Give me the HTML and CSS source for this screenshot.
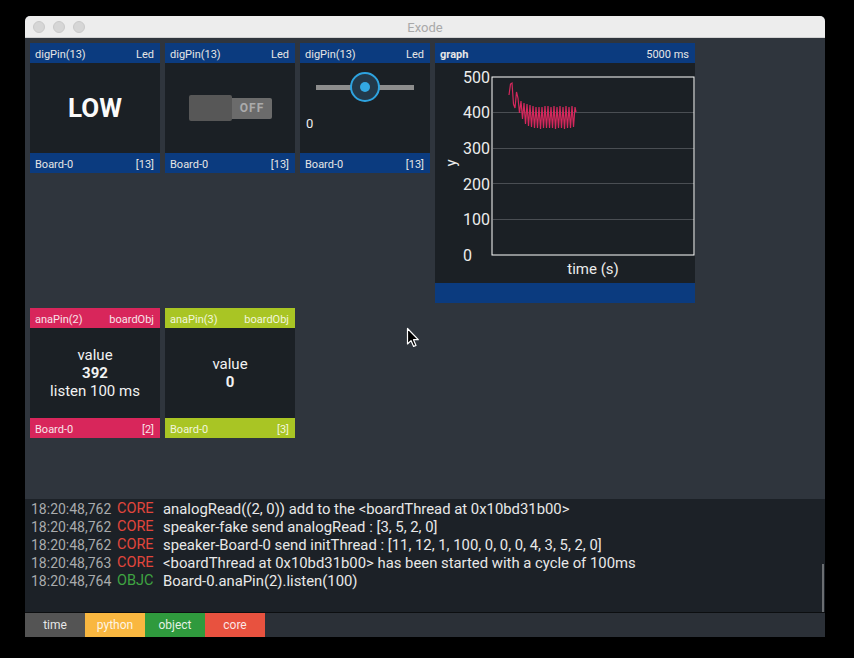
FILE: index.html
```html
<!DOCTYPE html>
<html>
<head>
<meta charset="utf-8">
<title>Exode</title>
<link rel="stylesheet" href="styles.css">
</head>
<body>
<div class="window">
  <div class="titlebar">
    <div class="lights"><span></span><span></span><span></span></div>
    <div class="title">Exode</div>
    <div></div>
  </div>
  <div class="dash">
    <div class="card blue">
      <div class="bar"><span>digPin(13)</span><span>Led</span></div>
      <div class="body"><span class="big">LOW</span></div>
      <div class="bar"><span>Board-0</span><span>[13]</span></div>
    </div>
    <div class="card blue">
      <div class="bar"><span>digPin(13)</span><span>Led</span></div>
      <div class="body">
        <div class="switch"><div class="handle"></div><div class="off">OFF</div></div>
      </div>
      <div class="bar"><span>Board-0</span><span>[13]</span></div>
    </div>
    <div class="card blue">
      <div class="bar"><span>digPin(13)</span><span>Led</span></div>
      <div class="body slider-body">
        <div class="slider"><div class="track"></div><div class="knob"><div class="dot"></div></div></div>
        <div class="slider-val">0</div>
      </div>
      <div class="bar"><span>Board-0</span><span>[13]</span></div>
    </div>
    <div class="card blue graph">
      <div class="bar"><span class="b">graph</span><span>5000 ms</span></div>
      <div class="graph-body">
        <svg width="260" height="220" viewBox="0 0 260 220">
          <g stroke="#4a4e53" stroke-width="1">
            <line x1="58" y1="49.5" x2="259" y2="49.5"/>
            <line x1="58" y1="85.5" x2="259" y2="85.5"/>
            <line x1="58" y1="120.5" x2="259" y2="120.5"/>
            <line x1="58" y1="156.5" x2="259" y2="156.5"/>
          </g>
          <rect x="57" y="14" width="202" height="178" fill="none" stroke="#ffffff" stroke-width="1"/>
          <g fill="#ececec" font-family="Roboto, 'Liberation Sans', sans-serif" font-size="16">
            <text x="28" y="19.5">500</text>
            <text x="28" y="55">400</text>
            <text x="28" y="91">300</text>
            <text x="28" y="126.5">200</text>
            <text x="28" y="162">100</text>
            <text x="28" y="197.5">0</text>
            <text x="158" y="211" font-size="15" text-anchor="middle">time (s)</text>
            <text x="0" y="0" font-size="15" text-anchor="middle" transform="translate(21 100) rotate(-90)">y</text>
          </g>
          <g transform="translate(-435 -63)">
            <polyline fill="none" stroke="#d4285c" stroke-width="1.2" stroke-linejoin="miter" points="509,95 510.5,84 512,83 513.5,104 515,108 516.5,92 518,98 519.5,113 521,101 522.5,119 524,103 525.5,124 527,104 528.5,126 530,105 531.5,127 533,106 534.5,128 536,107 537.5,128 539,107 540.5,129 542,107 543.5,128 545,106 546.5,128 548,106 549.5,128 551,107 552.5,128 554,106 555.5,129 557,107 558.5,128 560,106 561.5,128 563,107 564.5,129 566,106 567.5,128 569,107 570.5,128 572,106 573.5,127 575,107 576,112"/>
          </g>
        </svg>
      </div>
      <div class="bar"></div>
    </div>
    <div class="card pink">
      <div class="bar"><span>anaPin(2)</span><span>boardObj</span></div>
      <div class="body text-body">
        <div>value</div>
        <div class="b">392</div>
        <div>listen 100 ms</div>
      </div>
      <div class="bar"><span>Board-0</span><span>[2]</span></div>
    </div>
    <div class="card lime">
      <div class="bar"><span>anaPin(3)</span><span>boardObj</span></div>
      <div class="body text-body">
        <div>value</div>
        <div class="b">0</div>
      </div>
      <div class="bar"><span>Board-0</span><span>[3]</span></div>
    </div>
  </div>
  <div class="log">
    <div class="line"><span class="ts">18:20:48,762</span><span class="lv core">CORE</span><span class="msg">analogRead((2, 0)) add to the &lt;boardThread at 0x10bd31b00&gt;</span></div>
    <div class="line"><span class="ts">18:20:48,762</span><span class="lv core">CORE</span><span class="msg">speaker-fake send analogRead : [3, 5, 2, 0]</span></div>
    <div class="line"><span class="ts">18:20:48,762</span><span class="lv core">CORE</span><span class="msg">speaker-Board-0 send initThread : [11, 12, 1, 100, 0, 0, 0, 4, 3, 5, 2, 0]</span></div>
    <div class="line"><span class="ts">18:20:48,763</span><span class="lv core">CORE</span><span class="msg">&lt;boardThread at 0x10bd31b00&gt; has been started with a cycle of 100ms</span></div>
    <div class="line"><span class="ts">18:20:48,764</span><span class="lv objc">OBJC</span><span class="msg">Board-0.anaPin(2).listen(100)</span></div>
    <div class="scroll"></div>
  </div>
  <div class="tabs">
    <div class="tab t-time">time</div>
    <div class="tab t-python">python</div>
    <div class="tab t-object">object</div>
    <div class="tab t-core">core</div>
  </div>
  <svg class="cursor" width="14" height="21" viewBox="0 0 14 21">
    <path d="M1.5 1.5 L1.5 17 L5 13.6 L7.6 19.4 L10 18.4 L7.5 12.7 L12.3 12.7 Z" fill="#000" stroke="#fff" stroke-width="1.2" stroke-linejoin="round"/>
  </svg>
</div>
</body>
</html>
```

FILE: styles.css
```css
html, body {
  margin: 0;
  background: #000;
}
body {
  width: 854px;
  height: 658px;
  box-sizing: border-box;
  padding: 16px 0 0 25px;
  font-family: Roboto, "Liberation Sans", sans-serif;
}
.window {
  position: relative;
  width: 800px;
  height: 621px;
  display: flex;
  flex-direction: column;
  background: #2f353d;
  border-radius: 5px 5px 0 0;
  overflow: hidden;
}
.titlebar {
  height: 21px;
  flex: none;
  background: #ededed;
  border-bottom: 1px solid #d2d2d2;
  display: grid;
  grid-template-columns: 1fr auto 1fr;
  align-items: center;
}
.lights {
  display: flex;
  gap: 8px;
  padding-left: 8px;
}
.lights span {
  width: 12px;
  height: 12px;
  box-sizing: border-box;
  border-radius: 50%;
  background: #d6d6d6;
  border: 1px solid #c9c9c9;
}
.title {
  font-size: 13px;
  color: #a9a9a9;
  padding-top: 1px;
}
.dash {
  flex: 1;
  padding: 5px;
  display: flex;
  flex-wrap: wrap;
  align-items: flex-start;
  align-content: flex-start;
  gap: 5px;
}
.card {
  width: 130px;
  height: 130px;
  display: flex;
  flex-direction: column;
  background: #1b2025;
}
.bar {
  height: 20px;
  box-sizing: border-box;
  flex: none;
  display: flex;
  justify-content: space-between;
  align-items: center;
  padding: 3px 6px 0 5px;
  font-size: 11px;
  color: #e6e6e6;
}
.b { font-weight: bold; }
.blue .bar { background: #0b3b7f; }
.pink .bar { background: #d8265b; color: #f8e3e9; }
.lime .bar { background: #a9c524; color: #f1f6dc; }
.body {
  flex: 1;
  display: flex;
  flex-direction: column;
  align-items: center;
  justify-content: center;
  color: #f2f2f2;
}
.big {
  font-size: 26px;
  font-weight: bold;
  color: #fafafa;
}
.switch {
  display: flex;
  align-items: center;
  margin-left: 1px;
}
.handle {
  width: 43px;
  height: 26px;
  background: #575757;
  border-radius: 2px;
}
.off {
  width: 40px;
  height: 21px;
  background: #6b6b6b;
  border-radius: 0 2px 2px 0;
  display: flex;
  align-items: center;
  justify-content: center;
  font-size: 12px;
  font-weight: bold;
  letter-spacing: 1px;
  color: #ababab;
}
.slider-body {
  justify-content: flex-start;
  align-items: stretch;
  padding-top: 9px;
}
.slider {
  position: relative;
  height: 30px;
  margin: 0 16px;
  display: flex;
  align-items: center;
}
.track {
  flex: 1;
  height: 5px;
  background: #8d8d8d;
}
.knob {
  position: absolute;
  left: 50%;
  top: 0;
  margin-left: -15px;
  width: 30px;
  height: 30px;
  box-sizing: border-box;
  border-radius: 50%;
  border: 2px solid #2ea3e0;
  background: #23394a;
  display: flex;
  align-items: center;
  justify-content: center;
}
.dot {
  width: 10px;
  height: 10px;
  border-radius: 50%;
  background: #33a8e2;
}
.slider-val {
  margin: 14px 0 0 6px;
  font-size: 13px;
  color: #eeeeee;
}
.graph {
  width: 260px;
  height: 260px;
}
.graph-body {
  height: 220px;
  flex: none;
}
.graph-body svg { display: block; }
.text-body {
  font-size: 15px;
  line-height: 18px;
}
.log {
  position: relative;
  flex: none;
  box-sizing: border-box;
  height: 114px;
  padding: 1px 6px;
  background: #1c2127;
  border-bottom: 1px solid #0c0e10;
  font-size: 14px;
  line-height: 18px;
  color: #e8e8e8;
}
.line {
  display: flex;
  white-space: nowrap;
}
.ts {
  width: 86px;
  color: #a9abad;
}
.lv { width: 46px; font-size: 14.5px; }
.msg { font-size: 14.85px; }
.core { color: #e2463c; }
.objc { color: #3fa442; }
.scroll {
  position: absolute;
  right: 1px;
  bottom: 0;
  width: 2px;
  height: 48px;
  background: #6b6e72;
}
.tabs {
  height: 24px;
  flex: none;
  display: flex;
  background: #2b3037;
}
.tab {
  width: 60px;
  display: flex;
  align-items: center;
  justify-content: center;
  font-size: 12px;
  color: rgba(255, 255, 255, 0.88);
}
.t-time { background: #545454; }
.t-python { background: #f9b740; }
.t-object { background: #2f9a3d; }
.t-core { background: #e8523f; }
.cursor {
  position: absolute;
  left: 381px;
  top: 311px;
}
```
